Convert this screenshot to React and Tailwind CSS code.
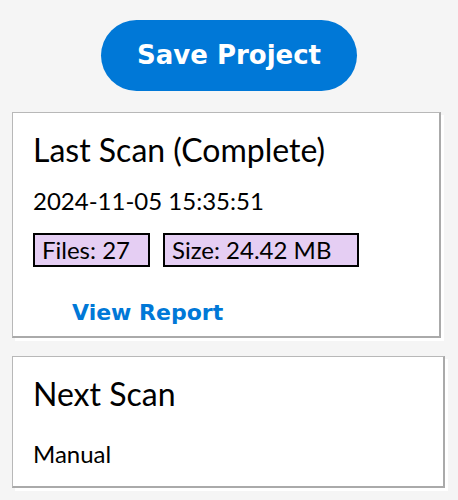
export default function App() {
  return (
    <div className="min-h-[500px] bg-[#f5f5f5] pt-5 px-3 font-['Lato',sans-serif] text-black">
      <div className="flex justify-center">
        <button className="w-[256px] h-[71px] rounded-full bg-[#0078d7] text-white text-[26px] font-bold font-['DejaVu_Sans',sans-serif] flex items-center justify-center">
          Save Project
        </button>
      </div>

      {/* last scan */}
      <div className="mt-[21px] w-[429px] bg-white border-t border-l border-[#b8b8b8] border-r-2 border-b-2 border-r-[#aaaaaa] border-b-[#aaaaaa] shadow-[3px_3px_0_#ffffff] pl-5 pt-[18px] pb-[10px]">
        <h1 className="text-[32px] leading-[1.2]">Last Scan (Complete)</h1>
        <p className="mt-[18px] text-[24px] leading-[1.2]">2024-11-05 15:35:51</p>
        <div className="mt-[17px] flex gap-[13px]">
          <span className="w-[117px] h-[34px] border-2 border-black bg-[#e5cef3] pl-[7px] text-[24px] leading-[30px]">Files: 27</span>
          <span className="w-[196px] h-[34px] border-2 border-black bg-[#e5cef3] pl-[7px] text-[24px] leading-[30px]">Size: 24.42 MB</span>
        </div>
        <button className="mt-[33px] ml-[39px] text-[22px] font-bold font-['DejaVu_Sans',sans-serif] text-[#0078d7] leading-[1.164]">
          View Report
        </button>
      </div>

      {/* next scan */}
      <div className="mt-[18px] w-[433px] bg-white border-t border-l border-[#b8b8b8] border-r-2 border-b-2 border-r-[#aaaaaa] border-b-[#aaaaaa] shadow-[3px_3px_0_#ffffff] pl-5 pt-[18px] pb-[18px]">
        <h2 className="text-[32px] leading-[1.2]">Next Scan</h2>
        <p className="mt-[26px] text-[24px] leading-[1.2]">Manual</p>
      </div>
    </div>
  );
}
